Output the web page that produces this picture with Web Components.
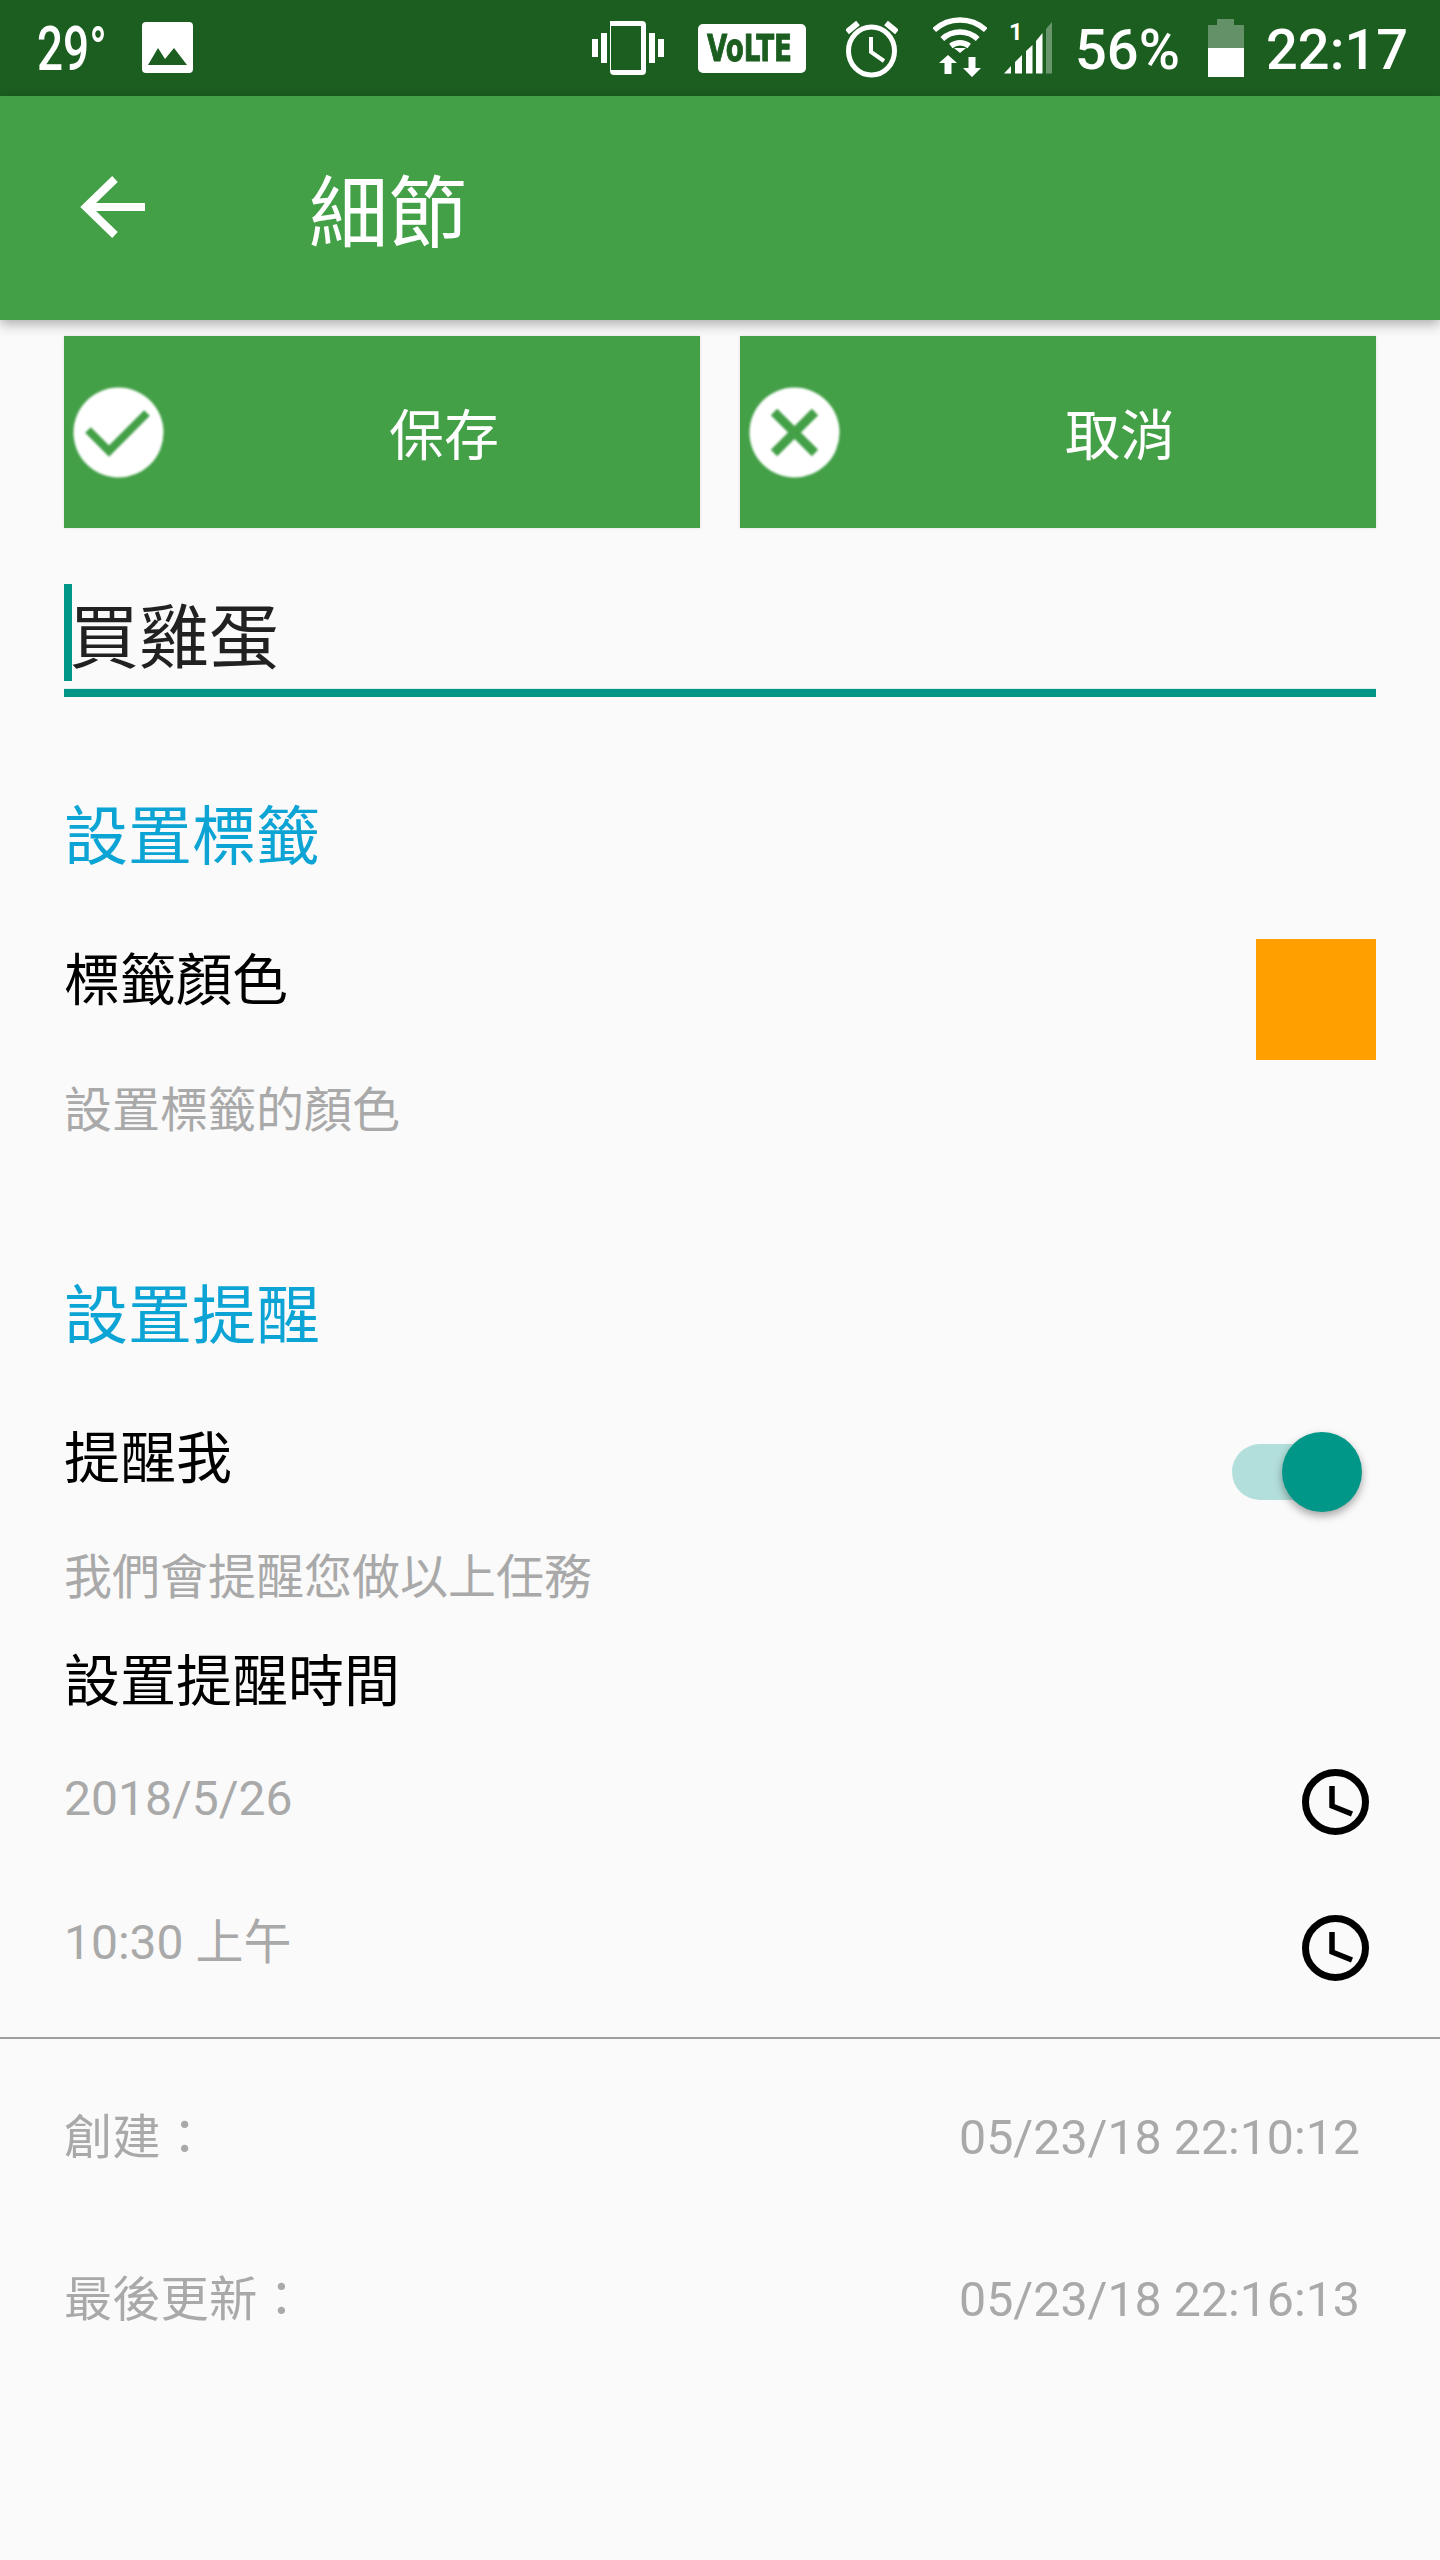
<!DOCTYPE html>
<html lang="zh-Hant">
<head>
<meta charset="utf-8">
<title>細節</title>
<style>
html,body{margin:0;padding:0;background:#fafafa}
body{width:1440px;height:2560px;overflow:hidden;font-family:Roboto,"Noto Sans CJK TC",sans-serif}
</style>
</head>
<body>
<status-bar></status-bar>
<app-bar>細節</app-bar>
<detail-page>
  <button-row>
    <action-button kind="ok">保存</action-button>
    <action-button kind="cancel">取消</action-button>
  </button-row>
  <title-input>買雞蛋</title-input>
  <section-head style="margin-top:97px">設置標籤</section-head>
  <pref-row summary="設置標籤的顏色" gap="50">
    標籤顏色
    <color-swatch slot="control"></color-swatch>
  </pref-row>
  <section-head style="margin-top:124px">設置提醒</section-head>
  <pref-row summary="我們會提醒您做以上任務" style="margin-top:64px" gap="39">
    提醒我
    <toggle-switch slot="control" style="margin-top:15px"></toggle-switch>
  </pref-row>
  <plain-label>設置提醒時間</plain-label>
  <time-row style="margin-top:49px">2018/5/26</time-row>
  <time-row style="margin-top:80px" shift="-2">10:30 上午</time-row>
  <rule-line></rule-line>
  <meta-row label="創建：" style="margin-top:67px">05/23/18 22:10:12</meta-row>
  <meta-row label="最後更新：" style="margin-top:102px">05/23/18 22:16:13</meta-row>
</detail-page>
<script>
const CJK='Roboto,"Noto Sans CJK TC",sans-serif';
function def(name,html,init){
  customElements.define(name,class extends HTMLElement{
    constructor(){super();this.attachShadow({mode:'open'}).innerHTML=html;}
    connectedCallback(){if(init)init(this,this.shadowRoot);}
  });
}
def('status-bar',`<style>
:host{display:flex;height:96px;background:#1b5e20;color:#fff;align-items:flex-start;font:500 56px/96px Roboto,sans-serif;padding:0 34px 0 37px;box-sizing:border-box;width:1440px}
svg{display:block;flex:none}
.t{display:block;flex:none;white-space:nowrap;height:96px;line-height:100px}
.temp{width:69px;margin-right:36px}
.temp span{display:inline-block;transform:scaleX(.74);transform-origin:0 50%;font-size:62px;line-height:98px}
.sp{flex:1}
.volte{position:relative;width:108px;height:49px;margin:24px 40px 0 34px;background:#fff;border-radius:5px;color:#1b5e20;flex:none}
.volte span{position:absolute;left:9px;top:0;font:700 38px/49px "DejaVu Sans",sans-serif;transform:scaleX(.69);transform-origin:0 50%;white-space:nowrap;-webkit-text-stroke:1px #1b5e20}
.sig{position:relative;width:48px;height:96px;flex:none;margin:0 25px 0 17px}
.sig span{position:absolute;left:5px;top:20px;font:700 24px/24px Roboto,sans-serif}
.sig svg{position:absolute;left:0;top:0}
</style>
<div class="t temp"><span>29°</span></div>
<svg width="51" height="96" viewBox="142 0 51 96"><rect x="142" y="22" width="51" height="51" rx="4" fill="#fff"/><path d="M148 65 L158 48 L165 59 L174 48 L187 65Z" fill="#1b5e20"/></svg>
<div class="sp"></div>
<svg width="72" height="96" viewBox="592 0 72 96" fill="#fff"><path d="M614 21h32a4 4 0 0 1 4 4v46a4 4 0 0 1-4 4h-28a4 4 0 0 1-4-4zM615 26v44h30V26z" fill-rule="evenodd" transform="translate(-4 0)"/><rect x="592" y="39" width="6" height="18"/><rect x="601" y="33" width="6" height="30"/><rect x="649" y="33" width="6" height="30"/><rect x="658" y="39" width="6" height="18"/></svg>
<div class="volte"><span>VoLTE</span></div>
<svg width="52" height="96" viewBox="846 0 52 96" fill="none" stroke="#fff"><ellipse cx="871.5" cy="51" rx="23" ry="24" stroke-width="5"/><path d="M871 37V52L884 61" stroke-width="4"/><path d="M847 32L858 23M886 23L897 32" stroke-width="6"/></svg>
<svg style="margin-left:35px" width="54" height="96" viewBox="933 0 54 96" fill="none" stroke="#fff"><path d="M934.2 30.1A38 38 0 0 1 985.8 30.1M942.3 38.9A26 26 0 0 1 977.7 38.9M950.8 46A15 15 0 0 1 969.2 46" stroke-width="5.5"/><path d="M954 48H966L960 53Z" fill="#fff" stroke="none"/><path d="M948 55L957 63H951.5V74H944.5V63H939ZM972 77L963 68H968.5V57H975.5V68H981Z" fill="#fff" stroke="none"/></svg>
<div class="sig"><svg width="48" height="96" viewBox="1004 0 48 96" fill="#fff"><path d="M1004 73.5L1011 66V73.5ZM1015 62L1022 55V73.5H1015ZM1026 51L1032.5 45V73.5H1026ZM1036 41L1042.500 33V73.5H1036Z"/><path d="M1046 29L1052 22V73.5H1046Z" opacity=".35"/></svg><span>1</span></div>
<div class="t" style="width:106px;margin-right:25px;margin-left:-2px">56%</div>
<svg width="36" height="96" viewBox="1208 0 36 96" fill="#fff" style="margin-left:2px"><path d="M1217 19H1234V25H1244V48H1208V25H1217Z" opacity=".32"/><rect x="1208" y="48" width="36" height="29"/></svg>
<div class="t" style="margin-left:22px;width:140px">22:17</div>`);
def('app-bar',`<style>
:host{display:flex;height:224px;position:relative;z-index:2;background:#43a047;color:#fff;box-shadow:0 4px 12px rgba(0,0,0,.32);align-items:center;width:1440px}
svg{display:block;flex:none;margin-left:76px}
.t{margin-left:160px;font:400 79px/80px "Noto Sans CJK TC",sans-serif}
</style>
<svg width="73" height="70" viewBox="76 174 73 70" fill="none" stroke="#fff" stroke-width="8"><path d="M145 208H86M115 180L86 208L115 236"/></svg>
<div class="t"><slot></slot></div>`);
def('detail-page',`<style>
:host{display:block;position:relative;padding-top:16px;background:#fafafa;font-family:${CJK}}
</style><slot></slot>`);
def('button-row',`<style>:host{display:flex;gap:40px;padding:0 64px}</style><slot></slot>`);
def('action-button',`<style>
:host{display:flex;flex:1;height:192px;background:#43a047;color:#fff;align-items:center;padding:0 9px;box-sizing:border-box;box-shadow:0 0 3px rgba(0,0,0,.12)}
svg{display:block;flex:none;filter:blur(.8px)}
.l{flex:1;margin-left:33px;text-align:center;font:400 55px/60px "Noto Sans CJK TC",sans-serif;margin-bottom:3px}
</style>
<svg width="91" height="91" viewBox="0 0 91 91"><circle cx="45.500" cy="45.500" r="45" fill="#fff"/><path id="p" fill="none" stroke="#43a047" stroke-width="8"/></svg>
<div class="l"><slot></slot></div>`,(el,r)=>{
  const ok=el.getAttribute('kind')==='ok';
  const p=r.getElementById('p');
  p.setAttribute('d',ok?'M15 43L36 64L74 26':'M25 25L66 66M66 25L25 66');
  if(!ok)p.setAttribute('stroke-width','9');
});
def('title-input',`<style>
:host{display:block;margin:56px 64px 0}
.b{display:flex;height:97px;align-items:center;font:400 70px/95px "Noto Sans CJK TC",sans-serif;color:#212121}
.c{width:8px;height:97px;background:#009688;flex:none;margin-right:-3px}
.u{height:8px;background:#009688;margin-top:8px;box-shadow:0 -1px 0 #e0ecec}
</style>
<div class="b"><div class="c"></div><div><slot></slot></div></div><div class="u"></div>`);
def('section-head',`<style>
:host{display:block;margin-left:64px;height:80px;font:400 64px/74px "Noto Sans CJK TC",sans-serif;color:#0ca4d4}
</style><slot></slot>`);
def('pref-row',`<style>
:host{display:flex;justify-content:space-between;align-items:flex-start;padding:0 64px;margin-top:65px}
.m{display:block}
.a{font:400 56px/74px "Noto Sans CJK TC",sans-serif;color:#000;height:80px}
.s{font:400 48px/74px "Noto Sans CJK TC",sans-serif;color:#a9a9a9;height:80px}
</style>
<div class="m"><div class="a"><slot></slot></div><div class="s" id="s"></div></div><slot name="control"></slot>`,(el,r)=>{
  const s=r.getElementById('s');s.textContent=el.getAttribute('summary');
  s.style.marginTop=(el.getAttribute('gap')||0)+'px';
});
def('color-swatch',`<style>:host{display:block;width:120px;height:121px;background:#ffa000}</style>`);
def('toggle-switch',`<style>
:host{display:block;position:relative;width:130px;height:80px;margin:13px 14px 0 0}
.tr{position:absolute;left:0;top:12px;width:112px;height:56px;border-radius:28px;background:#b2dfdb}
.th{position:absolute;left:50px;top:0;width:80px;height:80px;border-radius:50%;background:#009688;box-shadow:0 4px 8px rgba(0,0,0,.35)}
</style><div class="tr"></div><div class="th"></div>`);
def('plain-label',`<style>
:host{display:block;margin:24px 0 0 64px;height:80px;font:400 56px/74px "Noto Sans CJK TC",sans-serif;color:#000}
</style><slot></slot>`);
def('time-row',`<style>
:host{display:flex;justify-content:space-between;align-items:flex-start;height:66px;padding:0 71px 0 64px;font:400 48px/59px ${CJK};color:#a9a9a9}
svg{display:block;flex:none;filter:blur(.4px)}
</style>
<div id="t"><slot></slot></div>
<svg width="67" height="66" viewBox="0 0 67 66" fill="none" stroke="#000"><ellipse cx="33.500" cy="33" rx="30" ry="29.500" stroke-width="7"/><path d="M30 17V37L50 45" stroke-width="5.500"/></svg>`,(el,r)=>{
  const s=el.getAttribute('shift');if(s)r.getElementById('t').style.marginTop=s+'px';
});
def('rule-line',`<style>:host{display:block;height:2px;background:#9e9e9e;margin-top:56px}</style>`);
def('meta-row',`<style>
:host{display:flex;justify-content:space-between;height:60px;padding:0 80px 0 64px;font:400 48.3px/64px ${CJK};color:#a9a9a9}
</style><div id="l"></div><div><slot></slot></div>`,(el,r)=>{
  r.getElementById('l').textContent=el.getAttribute('label');
});
</script>
</body>
</html>
